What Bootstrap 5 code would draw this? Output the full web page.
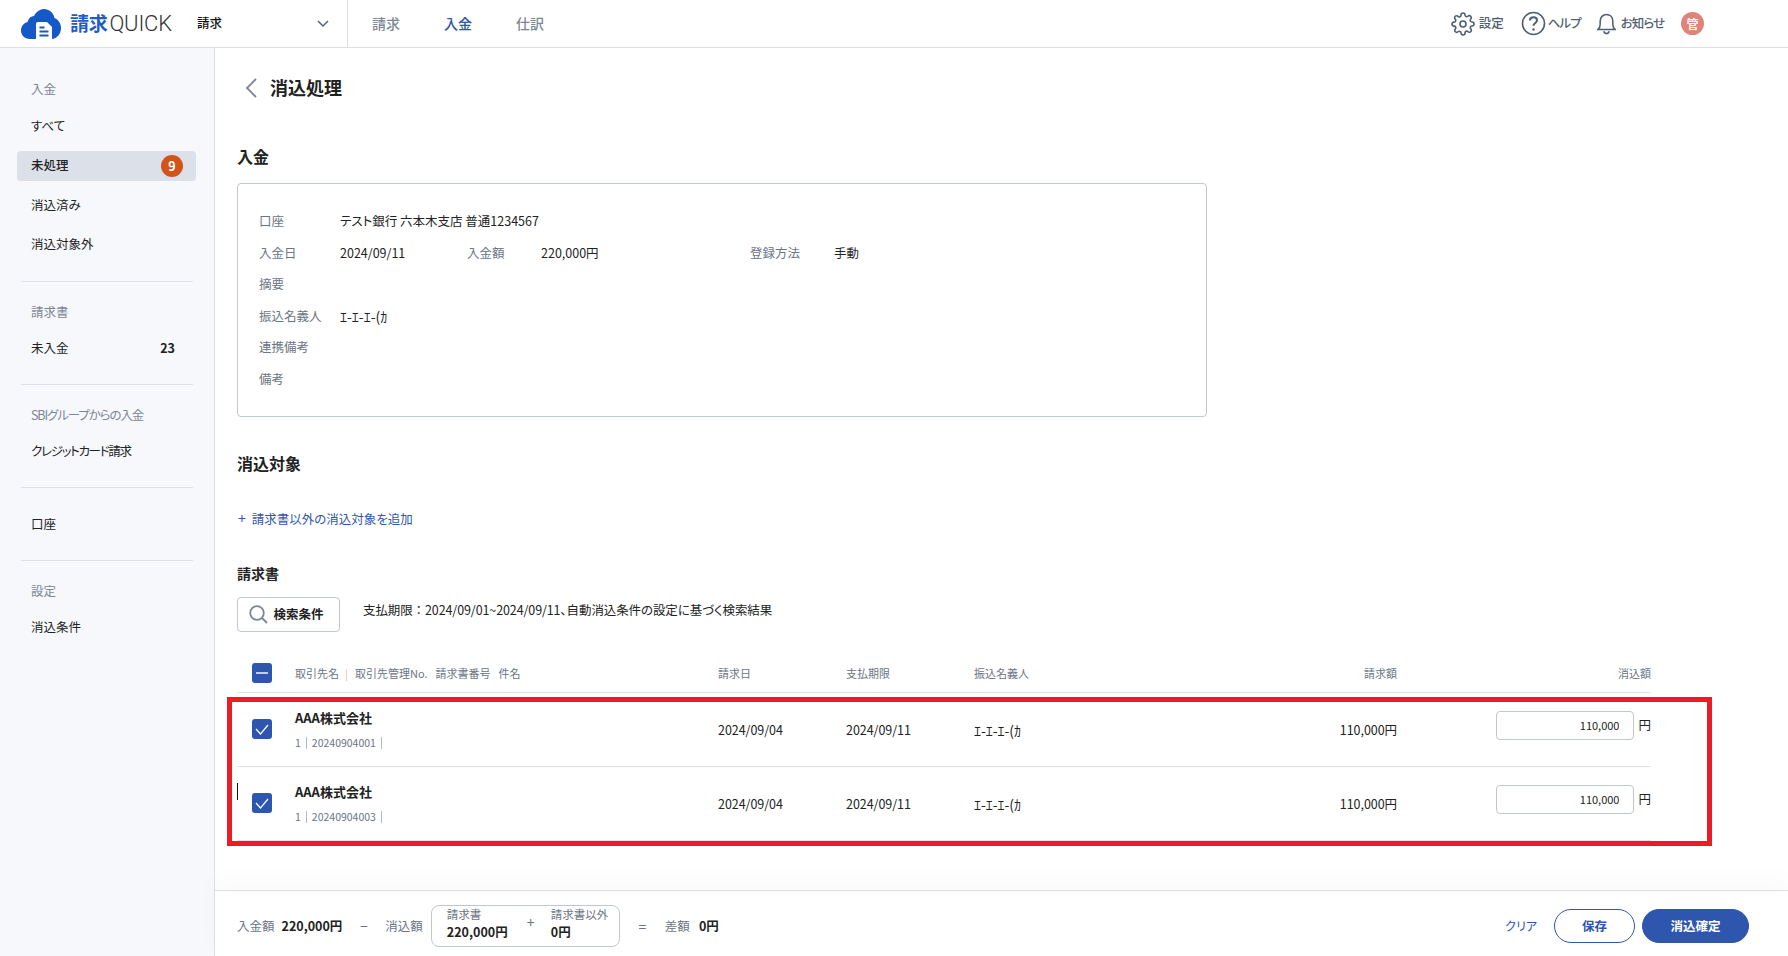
<!DOCTYPE html>
<html lang="ja">
<head>
<meta charset="utf-8">
<title>消込処理</title>
<link href="https://cdn.jsdelivr.net/npm/bootstrap@5.3.0/dist/css/bootstrap.min.css" rel="stylesheet">
<style>
html,body{height:100%;overflow:hidden}
body{font-family:"Noto Sans CJK JP","Noto Sans",sans-serif;font-size:12.5px;color:#222;font-feature-settings:"palt";background:#fff}
.topbar{height:48px;border-bottom:1px solid #dcdfe8;background:#fff;flex-wrap:nowrap;justify-content:flex-start;padding:0}
.logo-wrap{width:197px;padding-left:21px;gap:9px;align-items:center}
.logo-jp{font-size:19px;color:#1f5cc4;font-weight:700;letter-spacing:-.3px}
.logo-en{font-family:Roboto,sans-serif;font-weight:300;font-size:22px;color:#333;margin-left:2px;letter-spacing:-.2px}
.sys-select{width:151px;height:47px;border-right:1px solid #dcdfe8;font-weight:500;font-size:12.5px;color:#111;padding-right:18px}
.top-nav{gap:44px;padding-left:24px;font-size:14px}
.top-nav .nav-link{padding:0;color:#7b8794;font-weight:500}
.top-nav .nav-link.active{color:#2e56ae}
.top-tools{margin-left:auto;padding-right:84px;color:#4f5e70;font-size:12.5px}
.tool{color:#4f5e70;font-weight:500;display:flex;align-items:center}
.tool svg{display:block}
.t1{gap:4px;margin-right:17px}
.t2{gap:2px;margin-right:16px;letter-spacing:-.9px}
.t3{gap:5px;margin-right:17px;letter-spacing:-1px}
.ava{width:23px;height:23px;background:#e0837a;color:#fff;font-size:12px;font-weight:700}
.shell{height:908px}
.side{width:215px;flex:none;background:#f6f8fc;border-right:1px solid #dde0e8;padding-top:22px}
.side-label{color:#7d8794;font-size:12.5px;padding-left:31px;height:38px;line-height:38px;margin:11px 0 3px}
.side-label:first-child{margin-top:0}
.side-item{display:flex;justify-content:space-between;align-items:center;height:30px;margin:0 18px 9.5px 17px;padding:0 14px 0 14px;border-radius:4px;color:#222;font-size:12.5px;text-decoration:none}
.side-item.on{background:#dce0e8;font-weight:500}
.num{font-weight:700;font-size:12.5px;margin-right:7px}
.dot{width:22px;height:22px;padding:0;line-height:22px;background:#d2541b;font-size:12.5px;margin-right:-1px;border-radius:50%}
.side-rule{border:0;border-top:1px solid #dfe2ea;opacity:1;margin:20px 21px 0}
.first-rule{margin-top:21px}
.tight{letter-spacing:-1.3px}
.tightlabel{letter-spacing:-1.1px}
.acct{margin-top:22px}
.work{position:relative;min-width:0}
.scroll{padding:20px 100px 0 22px}
.ttl{height:40px;gap:13px;padding-left:8px}
.ttl h1{font-size:18px;font-weight:700;margin:0;color:#222}
.sec{font-size:16px;font-weight:700;line-height:24px;margin:0;color:#222}
.sec-a{margin-top:36px}
.sec-b{margin-top:34px}
.sec-c{font-size:14px;margin-top:30px}
.info{width:970px;height:234px;margin-top:15px;border:1px solid #c0c7d3;border-radius:4px;padding:22px 21px 0}
.inf-row{height:31.5px;display:flex;align-items:center}
.k{color:#6b7584;width:81px;flex:none}
.k2{width:74px}
.v1{width:127px;flex:none}
.v2{width:209px;flex:none}
.k3{width:84px}
.kana{font-feature-settings:normal;font-size:14px}
.inv-table td.kana{font-size:14px}
.addlink{display:block;margin-top:31px;line-height:24px;color:#2e56ae;text-decoration:none;font-size:12.5px}
.addlink .pl{margin:0 6px 0 1px;font-size:14px}
.find{margin-top:12px;gap:23px}
.find-btn{width:103px;height:35px;border:1px solid #c0c7d3;background:#fff;border-radius:4px;font-weight:700;font-size:12.5px;color:#222;gap:5px;padding:0 4px 0 0}
.nop{font-feature-settings:normal}
.find-note{letter-spacing:-.1px}
.inv-table{table-layout:fixed;width:1414px;margin:22px 0 0;border-collapse:collapse}
.inv-table th,.inv-table td{padding:0;border:0;background:transparent;vertical-align:middle;box-shadow:none}
.inv-table thead tr{height:38px;border-bottom:1px solid #dfe2ea}
.inv-table thead th{font-weight:400;font-size:11px;color:#6b7584}
.inv-table tbody tr{height:74px;border-bottom:1px solid #dfe2ea}
.inv-table td{font-size:12.5px;color:#222}
.inv-table td.dt{padding-top:2px;letter-spacing:-.05px}
.ck{display:flex;width:20px;height:20px;margin-left:15px;border-radius:3px;background:#2e56ae;align-items:center;justify-content:center}
.pipe{color:#e7b9ae;margin:0 7px 0 6px}
.gap2{margin-left:8px}
.co{font-size:13px;font-weight:700;line-height:20px;color:#222}
.subl{font-size:10.5px;line-height:16px;margin-top:7px;color:#6b7584}
.subl i{display:inline-block;width:1px;height:12px;background:#b5bbc6;margin:0 5px;vertical-align:-2px}
.amt{gap:4px;padding-bottom:8px;justify-content:flex-end}
.amt-in{width:138px;flex:none;height:29px;font-size:11px;text-align:right;padding:0 14px 0 0;border:1px solid #c0c7d3;border-radius:4px;color:#222;font-family:inherit}
.caret{position:absolute;left:22px;top:735px;width:1px;height:17px;background:#111}
.redbox{position:absolute;left:12px;top:649px;width:1485px;height:149px;border:5px solid #ed1c24;pointer-events:none}
.foot{height:66px;border-top:1px solid #dcdfe8;padding:5px 39px 0 22px;position:absolute;left:0;right:0;bottom:0;background:#fff;box-shadow:0 -10px 18px rgba(120,120,150,.035);color:#6b7584;white-space:nowrap}
.foot b{color:#222;font-weight:700}
.foot .amt-b{margin-left:7px}
.foot .amt-c{margin-left:9px}
.sumbox{width:189px;height:42px;border:1px solid #c0c7d3;border-radius:8px;margin-left:8px;padding:0 15px 4px;display:flex;align-items:center}
.sumbox small{display:block;font-size:11.5px;line-height:15px;color:#6b7584}
.sumbox b{display:block;line-height:18px;margin-top:1px}
.sum1{width:68px;flex:none}
.op{width:43px;text-align:center;color:#6b7584;font-size:14px;flex:none}
.opeq{width:45px}
.sumbox .op{width:36px;text-align:left;padding-left:12px;margin-top:-4px}
.clear{color:#2e56ae;text-decoration:none;font-size:12px;margin-right:17px}
.btn-save,.btn-ok{height:34px;border-radius:17px;font-weight:700;font-size:12.5px;padding:0;--bs-btn-font-size:12.5px}
.btn-save{width:81px;border:1px solid #2e56ae;color:#2e56ae;background:#fff}
.btn-ok{width:107px;margin-left:7px;background:#2e56ae;border:1px solid #2e56ae;color:#fff}
</style>
</head>
<body>
<nav class="navbar topbar">
  <div class="d-flex logo-wrap">
    <svg width="40" height="30" viewBox="0 0 40 30" aria-hidden="true"><path fill="#1558c9" d="M9 30C3.500 30 0 26 0 21.500 0 17 3 14 6.500 13 7.500 9 10 7 13 7 15 3 19 0 23 0c5 0 9.500 3.500 10.500 9C37.500 10.500 40 14.500 40 19c0 6-4 11-10 11z"/><path fill="#fff" d="M15 15q0-2 2-2h9l5 5v12H15z"/><path stroke="#1558c9" stroke-width="1.800" d="M18.500 18.500h5M18.500 22.500h9M18.500 26.500h9"/></svg>
    <div class="d-flex align-items-center"><span class="logo-jp">請求</span><span class="logo-en">QUICK</span></div>
  </div>
  <div class="d-flex align-items-center justify-content-between sys-select">
    <span>請求</span>
    <svg width="12" height="8" viewBox="0 0 12 8" aria-hidden="true"><path d="M1 1l5 5 5-5" fill="none" stroke="#4f5e70" stroke-width="1.400"/></svg>
  </div>
  <div class="nav top-nav">
    <a class="nav-link" href="#">請求</a>
    <a class="nav-link active" href="#">入金</a>
    <a class="nav-link" href="#">仕訳</a>
  </div>
  <div class="d-flex align-items-center top-tools">
    <span class="tool t1"><svg width="24" height="24" viewBox="0 0 24 24" fill="none" stroke="#4f5e70" stroke-width="1.600"><circle cx="12" cy="12" r="3"/><path d="M19.400 15a1.650 1.650 0 0 0 .33 1.820l.06.06a2 2 0 0 1 0 2.830 2 2 0 0 1-2.830 0l-.06-.06a1.650 1.650 0 0 0-1.820-.33 1.650 1.650 0 0 0-1 1.510V21a2 2 0 0 1-2 2 2 2 0 0 1-2-2v-.09A1.650 1.650 0 0 0 9 19.400a1.650 1.650 0 0 0-1.820.33l-.06.06a2 2 0 0 1-2.830 0 2 2 0 0 1 0-2.830l.06-.06a1.650 1.650 0 0 0 .33-1.820 1.650 1.650 0 0 0-1.510-1H3a2 2 0 0 1-2-2 2 2 0 0 1 2-2h.09A1.650 1.650 0 0 0 4.600 9a1.650 1.650 0 0 0-.33-1.820l-.06-.06a2 2 0 0 1 0-2.830 2 2 0 0 1 2.830 0l.06.06a1.650 1.650 0 0 0 1.820.33H9a1.650 1.650 0 0 0 1-1.510V3a2 2 0 0 1 2-2 2 2 0 0 1 2 2v.09a1.650 1.650 0 0 0 1 1.510 1.650 1.650 0 0 0 1.820-.33l.06-.06a2 2 0 0 1 2.830 0 2 2 0 0 1 0 2.830l-.06.06a1.650 1.650 0 0 0-.33 1.820V9a1.650 1.650 0 0 0 1.510 1H21a2 2 0 0 1 2 2 2 2 0 0 1-2 2h-.09a1.650 1.650 0 0 0-1.510 1z"/></svg>設定</span>
    <span class="tool t2"><svg width="25" height="25" viewBox="0 0 25 25" fill="none" stroke="#4f5e70" stroke-width="1.600"><circle cx="12.500" cy="12.500" r="11"/><path d="M9 9.500c0-2 1.500-3.200 3.500-3.200s3.500 1.300 3.500 3c0 2.700-3.500 2.700-3.500 5.500" stroke-width="2"/><circle cx="12.500" cy="18.500" r="1.200" fill="#4f5e70" stroke="none"/></svg>ヘルプ</span>
    <span class="tool t3"><svg width="19" height="22" viewBox="0 0 21 23" fill="none" stroke="#4f5e70" stroke-width="1.700"><path d="M1 17.500c2-1.500 2.500-3 2.500-5.500V8.500C3.500 4 6.500 1 10.500 1s7 3 7 7.500V12c0 2.500.5 4 2.500 5.500z"/><path d="M7.500 19.500c.4 1.500 1.500 2.500 3 2.500s2.600-1 3-2.500"/></svg>お知らせ</span>
    <span class="ava rounded-circle d-flex align-items-center justify-content-center">管</span>
  </div>
</nav>
<div class="d-flex shell">
  <aside class="side">
    <div class="side-label">入金</div>
    <a class="side-item" href="#">すべて</a>
    <a class="side-item on" href="#">未処理<span class="badge dot">9</span></a>
    <a class="side-item" href="#">消込済み</a>
    <a class="side-item" href="#">消込対象外</a>
    <hr class="side-rule first-rule">
    <div class="side-label">請求書</div>
    <a class="side-item" href="#">未入金<span class="num">23</span></a>
    <hr class="side-rule">
    <div class="side-label"><span class="tightlabel">SBIグループからの入金</span></div>
    <a class="side-item" href="#"><span class="tight">クレジットカード請求</span></a>
    <hr class="side-rule">
    <a class="side-item acct" href="#">口座</a>
    <hr class="side-rule">
    <div class="side-label">設定</div>
    <a class="side-item" href="#">消込条件</a>
  </aside>
  <main class="work flex-grow-1">
    <div class="scroll">
      <div class="d-flex align-items-center ttl">
        <svg width="12" height="20" viewBox="0 0 12 20" aria-hidden="true"><path d="M11 1L2 10l9 9" fill="none" stroke="#7b8794" stroke-width="1.800"/></svg>
        <h1>消込処理</h1>
      </div>
      <h2 class="sec sec-a">入金</h2>
      <div class="info">
        <div class="inf-row"><span class="k">口座</span><span>テスト銀行 六本木支店 普通1234567</span></div>
        <div class="inf-row"><span class="k">入金日</span><span class="v1">2024/09/11</span><span class="k k2">入金額</span><span class="v2">220,000円</span><span class="k k3">登録方法</span><span>手動</span></div>
        <div class="inf-row"><span class="k">摘要</span></div>
        <div class="inf-row"><span class="k">振込名義人</span><span class="kana">ｴ-ｴ-ｴ-(ｶ</span></div>
        <div class="inf-row"><span class="k">連携備考</span></div>
        <div class="inf-row"><span class="k">備考</span></div>
      </div>
      <h2 class="sec sec-b">消込対象</h2>
      <a class="addlink" href="#"><span class="pl">+</span>請求書以外の消込対象を追加</a>
      <h3 class="sec sec-c">請求書</h3>
      <div class="d-flex find">
        <button type="button" class="btn find-btn d-flex align-items-center justify-content-center">
          <svg width="19" height="19" viewBox="0 0 19 19" aria-hidden="true"><circle cx="8" cy="8" r="6.800" fill="none" stroke="#7b8794" stroke-width="1.800"/><path d="M13 13l5 5" stroke="#7b8794" stroke-width="1.800"/></svg>検索条件</button>
        <div class="pt-1 find-note">支払期限<span class="nop">：</span>2024/09/01~2024/09/11、自動消込条件の設定に基づく検索結果</div>
      </div>
      <table class="table inv-table">
        <colgroup><col style="width:58px"><col style="width:423px"><col style="width:128px"><col style="width:128px"><col style="width:200px"><col style="width:223px"><col style="width:254px"></colgroup>
        <thead>
          <tr>
            <th><span class="ck"><svg width="12" height="2" viewBox="0 0 12 2" aria-hidden="true"><path d="M0 1h12" stroke="#fff" stroke-width="1.400"/></svg></span></th>
            <th>取引先名<span class="pipe">|</span>取引先管理No.<span class="gap2">請求書番号</span><span class="gap2">件名</span></th>
            <th>請求日</th>
            <th>支払期限</th>
            <th>振込名義人</th>
            <th class="text-end">請求額</th>
            <th class="text-end">消込額</th>
          </tr>
        </thead>
        <tbody>
          <tr>
            <td><span class="ck"><svg width="14" height="11" viewBox="0 0 14 11" aria-hidden="true"><path d="M1 5l4.500 5L13 1" fill="none" stroke="#fff" stroke-width="1.200"/></svg></span></td>
            <td><div class="co">AAA株式会社</div><div class="subl">1<i></i>20240904001<i></i></div></td>
            <td class="dt">2024/09/04</td>
            <td class="dt">2024/09/11</td>
            <td class="dt kana">ｴ-ｴ-ｴ-(ｶ</td>
            <td class="dt text-end">110,000円</td>
            <td><div class="d-flex align-items-center amt"><input class="form-control amt-in" value="110,000" aria-label="消込額"><span>円</span></div></td>
          </tr>
          <tr>
            <td><span class="ck"><svg width="14" height="11" viewBox="0 0 14 11" aria-hidden="true"><path d="M1 5l4.500 5L13 1" fill="none" stroke="#fff" stroke-width="1.200"/></svg></span></td>
            <td><div class="co">AAA株式会社</div><div class="subl">1<i></i>20240904003<i></i></div></td>
            <td class="dt">2024/09/04</td>
            <td class="dt">2024/09/11</td>
            <td class="dt kana">ｴ-ｴ-ｴ-(ｶ</td>
            <td class="dt text-end">110,000円</td>
            <td><div class="d-flex align-items-center amt"><input class="form-control amt-in" value="110,000" aria-label="消込額"><span>円</span></div></td>
          </tr>
        </tbody>
      </table>
    </div>
    <div class="caret"></div>
    <div class="redbox"></div>
    <footer class="foot d-flex align-items-center">
      <span>入金額</span><b class="amt-b">220,000円</b>
      <span class="op">−</span>
      <span>消込額</span>
      <div class="sumbox">
        <div class="sum1"><small>請求書</small><b>220,000円</b></div>
        <span class="op">+</span>
        <div><small>請求書以外</small><b>0円</b></div>
      </div>
      <span class="op opeq">=</span>
      <span>差額</span><b class="amt-c">0円</b>
      <div class="ms-auto d-flex align-items-center">
        <a class="clear" href="#">クリア</a>
        <button type="button" class="btn btn-save">保存</button>
        <button type="button" class="btn btn-ok">消込確定</button>
      </div>
    </footer>
  </main>
</div>
<script src="https://cdn.jsdelivr.net/npm/bootstrap@5.3.0/dist/js/bootstrap.bundle.min.js"></script>
</body>
</html>
